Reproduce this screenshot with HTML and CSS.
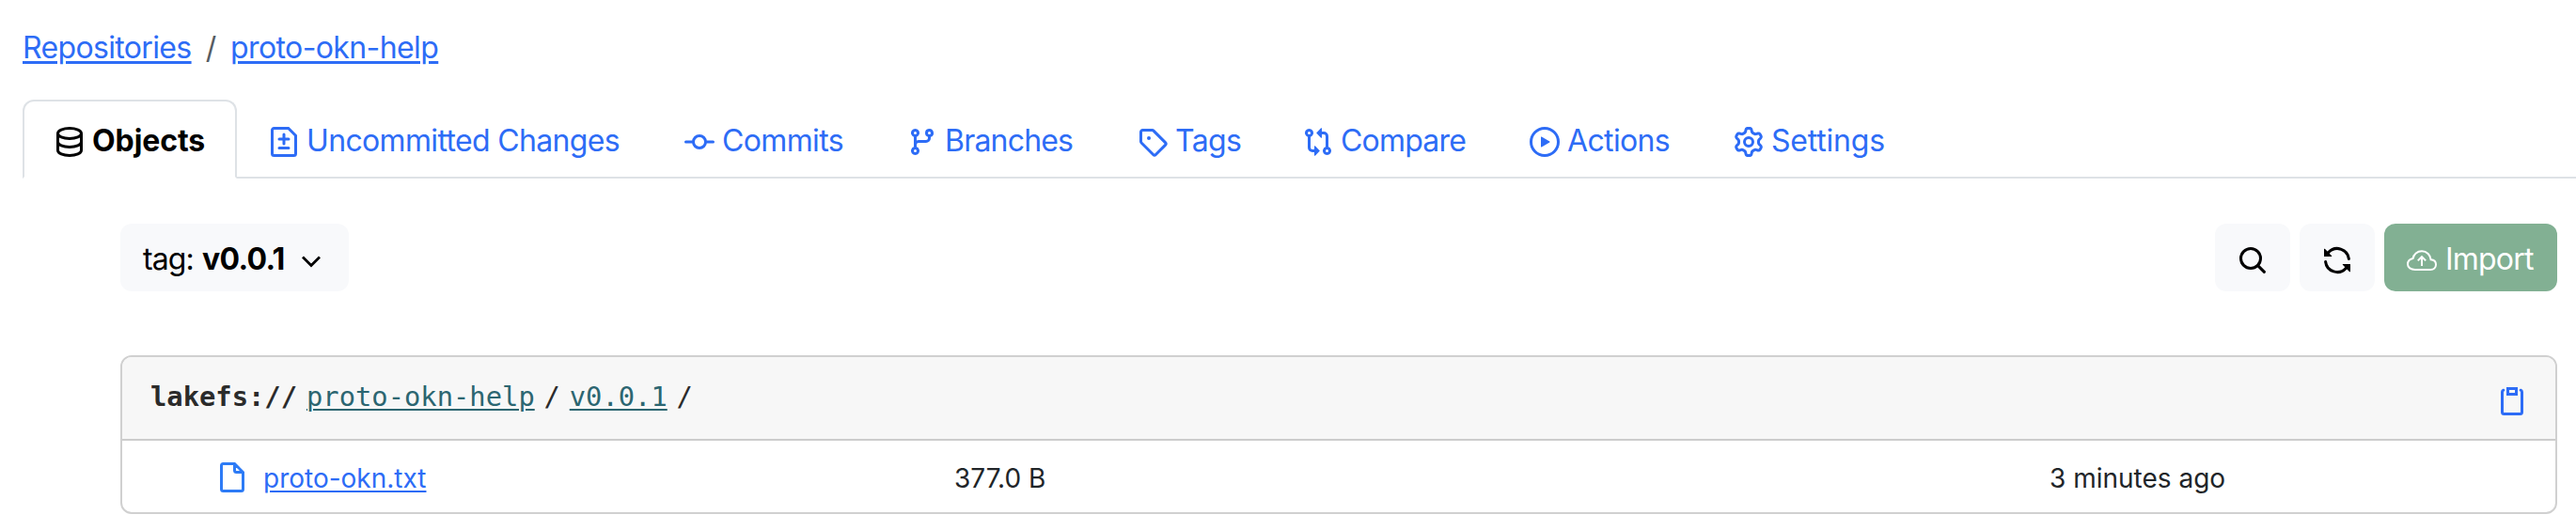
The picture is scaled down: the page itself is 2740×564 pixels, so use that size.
FILE: index.html
```html
<!DOCTYPE html>
<html lang="en">
<head>
<meta charset="utf-8">
<title>proto-okn-help</title>
<link rel="stylesheet" href="styles.css">
</head>
<body>
<nav class="breadcrumb"><a class="crumb-root" href="#">Repositories</a><span class="crumb-sep">/</span><a class="crumb-repo" href="#">proto-okn-help</a></nav>

<nav class="tabs">
  <a class="tab active"><svg class="icon line" viewBox="0 0 16 16"><ellipse cx="8" cy="3.5" rx="6.25" ry="2.75"/><path d="M1.75 3.5v9c0 1.52 2.8 2.75 6.25 2.75s6.25-1.23 6.25-2.75v-9M1.75 8c0 1.52 2.8 2.75 6.25 2.75S14.25 9.52 14.25 8"/></svg><span class="label w-objects">Objects</span></a>
  <a class="tab"><svg class="icon line" viewBox="0 0 16 16"><path d="M2.75.75h7.6l3.9 3.9v9.6a1 1 0 0 1-1 1H2.75a1 1 0 0 1-1-1V1.75a1 1 0 0 1 1-1ZM8 4v5M5.5 6.5h5M5.5 11.25h5" stroke-linecap="round"/></svg><span class="label w-changes">Uncommitted Changes</span></a>
  <a class="tab"><svg class="icon line" viewBox="0 0 16 16"><circle cx="8" cy="8" r="3.25"/><path d="M.75 8h4M11.25 8h4" stroke-linecap="round"/></svg><span class="label w-commits">Commits</span></a>
  <a class="tab"><svg class="icon" viewBox="0 0 16 16"><path d="M9.5 3.25a2.25 2.25 0 1 1 3 2.122V6A2.5 2.5 0 0 1 10 8.5H6a1 1 0 0 0-1 1v1.128a2.251 2.251 0 1 1-1.5 0V5.372a2.25 2.25 0 1 1 1.5 0v1.836A2.493 2.493 0 0 1 6 7h4a1 1 0 0 0 1-1v-.628A2.25 2.25 0 0 1 9.5 3.25Zm-6 0a.75.75 0 1 0 1.5 0 .75.75 0 0 0-1.5 0Zm8.25-.75a.75.75 0 1 0 0 1.5.75.75 0 0 0 0-1.5ZM4.25 12a.75.75 0 1 0 0 1.5.75.75 0 0 0 0-1.5Z"/></svg><span class="label w-branches">Branches</span></a>
  <a class="tab"><svg class="icon" viewBox="0 0 16 16"><path d="M1 7.775V2.75C1 1.784 1.784 1 2.75 1h5.025c.464 0 .91.184 1.238.513l6.25 6.25a1.75 1.75 0 0 1 0 2.474l-5.026 5.026a1.75 1.75 0 0 1-2.474 0l-6.25-6.25A1.752 1.752 0 0 1 1 7.775Zm1.5 0c0 .066.026.13.073.177l6.25 6.25a.25.25 0 0 0 .354 0l5.025-5.025a.25.25 0 0 0 0-.354l-6.25-6.25a.25.25 0 0 0-.177-.073H2.75a.25.25 0 0 0-.25.25ZM6 5a1 1 0 1 1 0 2 1 1 0 0 1 0-2Z"/></svg><span class="label w-tags">Tags</span></a>
  <a class="tab"><svg class="icon" viewBox="0 0 16 16"><path d="M9.573.677A.25.25 0 0 1 10 .854V2.5h1A2.5 2.5 0 0 1 13.5 5v5.628a2.251 2.251 0 1 1-1.5 0V5a1 1 0 0 0-1-1h-1v1.646a.25.25 0 0 1-.427.177L7.177 3.427a.25.25 0 0 1 0-.354ZM6 12v-1.646a.25.25 0 0 1 .427-.177l2.396 2.396a.25.25 0 0 1 0 .354l-2.396 2.396A.25.25 0 0 1 6 15.146V13.5H5A2.5 2.5 0 0 1 2.5 11V5.372a2.25 2.25 0 1 1 1.5 0V11a1 1 0 0 0 1 1ZM4 3.25a.75.75 0 1 0-1.5 0 .75.75 0 0 0 1.5 0ZM12.75 12a.75.75 0 1 0 0 1.5.75.75 0 0 0 0-1.5Z"/></svg><span class="label w-compare">Compare</span></a>
  <a class="tab"><svg class="icon" viewBox="0 0 16 16"><path d="M8 0a8 8 0 1 1 0 16A8 8 0 0 1 8 0ZM1.5 8a6.5 6.5 0 1 0 13 0 6.5 6.5 0 0 0-13 0Zm4.879-2.773 4.264 2.559a.25.25 0 0 1 0 .428l-4.264 2.559A.25.25 0 0 1 6 10.559V5.442a.25.25 0 0 1 .379-.215Z"/></svg><span class="label w-actions">Actions</span></a>
  <a class="tab"><svg class="icon" viewBox="0 0 16 16"><path d="M8 0a8.2 8.2 0 0 1 .701.031C9.444.095 9.99.645 10.16 1.29l.288 1.107c.018.066.079.158.212.224.231.114.454.243.668.386.123.082.233.09.299.071l1.103-.303c.644-.176 1.392.021 1.82.63.27.385.506.792.704 1.218.315.675.111 1.422-.364 1.891l-.814.806c-.049.048-.098.147-.088.294.016.257.016.515 0 .772-.01.147.038.246.088.294l.814.806c.475.469.679 1.216.364 1.891a7.977 7.977 0 0 1-.704 1.217c-.428.61-1.176.807-1.82.63l-1.102-.302c-.067-.019-.177-.011-.3.071a5.909 5.909 0 0 1-.668.386c-.133.066-.194.158-.211.224l-.29 1.106c-.168.646-.715 1.196-1.458 1.26a8.006 8.006 0 0 1-1.402 0c-.743-.064-1.289-.614-1.458-1.26l-.289-1.106c-.018-.066-.079-.158-.212-.224a5.738 5.738 0 0 1-.668-.386c-.123-.082-.233-.09-.299-.071l-1.103.303c-.644.176-1.392-.021-1.82-.63a8.12 8.12 0 0 1-.704-1.218c-.315-.675-.111-1.422.363-1.891l.815-.806c.05-.048.098-.147.088-.294a6.214 6.214 0 0 1 0-.772c.01-.147-.038-.246-.088-.294l-.815-.806C.635 6.045.431 5.298.746 4.623a7.92 7.92 0 0 1 .704-1.217c.428-.61 1.176-.807 1.82-.63l1.102.302c.067.019.177.011.3-.071.214-.143.437-.272.668-.386.133-.066.194-.158.211-.224l.29-1.106C6.009.645 6.556.095 7.299.03 7.53.01 7.764 0 8 0Zm-.571 1.525c-.036.003-.108.036-.137.146l-.289 1.105c-.147.561-.549.967-.998 1.189-.173.086-.34.183-.5.29-.417.278-.97.423-1.529.27l-1.103-.303c-.109-.03-.175.016-.195.045-.22.312-.412.644-.573.99-.014.031-.021.11.059.19l.815.806c.411.406.562.957.53 1.456a4.709 4.709 0 0 0 0 .582c.032.499-.119 1.05-.53 1.456l-.815.806c-.081.08-.073.159-.059.19.162.346.353.677.573.989.02.03.085.076.195.046l1.102-.303c.56-.153 1.113-.008 1.53.27.161.107.328.204.501.29.447.222.85.629.997 1.189l.289 1.105c.029.109.101.143.137.146a6.6 6.6 0 0 0 1.142 0c.036-.003.108-.036.137-.146l.289-1.105c.147-.561.549-.967.998-1.189.173-.086.34-.183.5-.29.417-.278.97-.423 1.529-.27l1.103.303c.109.029.175-.016.195-.045.22-.313.411-.644.573-.99.014-.031.021-.11-.059-.19l-.815-.806c-.411-.406-.562-.957-.53-1.456a4.709 4.709 0 0 0 0-.582c-.032-.499.119-1.05.53-1.456l.815-.806c.081-.08.073-.159.059-.19a6.464 6.464 0 0 0-.573-.989c-.02-.03-.085-.076-.195-.046l-1.102.303c-.56.153-1.113.008-1.53-.27a4.44 4.44 0 0 0-.501-.29c-.447-.222-.85-.629-.997-1.189l-.289-1.105c-.029-.11-.101-.143-.137-.146a6.6 6.6 0 0 0-1.142 0ZM11 8a3 3 0 1 1-6 0 3 3 0 0 1 6 0ZM9.5 8a1.5 1.5 0 1 0-3.001.001A1.5 1.5 0 0 0 9.5 8Z"/></svg><span class="label w-settings">Settings</span></a>
</nav>

<main class="content">
  <div class="toolbar">
    <button class="btn ref"><span class="ref-kind">tag:</span><strong class="ref-name">v0.0.1</strong><svg class="chevron" viewBox="0 0 24 16"><path d="M3 3.5l9 9 9-9"/></svg></button>
    <div class="actions">
      <button class="btn square"><svg class="icon line" viewBox="0 0 16 16"><circle cx="7" cy="7" r="5.25"/><path d="M10.8 10.8l3.4 3.4" stroke-linecap="round"/></svg></button>
      <button class="btn square"><svg class="icon" viewBox="0 0 16 16"><path d="M1.705 8.005a.75.75 0 0 1 .834.656 5.5 5.5 0 0 0 9.592 2.97l-1.204-1.204a.25.25 0 0 1 .177-.427h3.646a.25.25 0 0 1 .25.25v3.646a.25.25 0 0 1-.427.177l-1.38-1.38A7.002 7.002 0 0 1 1.05 8.84a.75.75 0 0 1 .656-.834ZM8 2.5a5.487 5.487 0 0 0-4.131 1.869l1.204 1.204A.25.25 0 0 1 4.896 6H1.25A.25.25 0 0 1 1 5.75V2.104a.25.25 0 0 1 .427-.177l1.38 1.38A7.002 7.002 0 0 1 14.95 7.16a.75.75 0 0 1-1.49.178A5.5 5.5 0 0 0 8 2.5Z"/></svg></button>
      <button class="btn import"><svg class="icon cloud" viewBox="0 0 16 16"><path d="M4.4 13H12.7C14.3 13 15.5 11.9 15.5 10.3S14.3 7.7 12.8 7.6C12.6 5.3 10.7 3.1 8 3.1 5.6 3.1 3.6 4.8 3.3 7 1.8 7.3.5 8.4.5 10.1.5 11.8 2.2 13 4.4 13ZM8 11V6.3M5.9 8.2L8 6.1l2.1 2.1"/></svg><span class="btn-text">Import</span></button>
    </div>
  </div>

  <section class="card">
    <header class="card-head">
      <div class="uri"><strong class="scheme">lakefs://</strong><a href="#">proto-okn-help</a><b>/</b><a href="#">v0.0.1</a><b>/</b></div>
      <svg class="icon line clip" viewBox="0 0 16 16"><path d="M5.75 1.75h4.5v3h-4.5z"/><path d="M3.4 2.6a1 1 0 0 0-.65.9V14.25c0 .55.45 1 1 1h8.5c.55 0 1-.45 1-1V3.5a1 1 0 0 0-.65-.9" stroke-linecap="round"/></svg>
    </header>
    <div class="row">
      <div class="file"><svg class="icon line" viewBox="0 0 16 16"><path d="M3.75.75h6l4.5 4.5v9a1 1 0 0 1-1 1h-9.5a1 1 0 0 1-1-1V1.75a1 1 0 0 1 1-1ZM9.75.75v3.5a1 1 0 0 0 1 1h3.5"/></svg><a href="#">proto-okn.txt</a></div>
      <div class="size">377.0 B</div>
      <div class="age">3 minutes ago</div>
    </div>
  </section>
</main>
</body>
</html>
```
FILE: styles.css
```css
* { box-sizing: border-box; }
body {
  margin: 0;
  background: #fff;
  color: #212529;
  font: 32px/48px Inter, "Liberation Sans", sans-serif;
  white-space: nowrap;
  overflow: hidden;
}
a { color: #2d6cf6; }
.icon { width: 32px; height: 32px; flex: none; fill: currentColor; }
.line { fill: none; stroke: currentColor; stroke-width: 1.5; }

.breadcrumb {
  display: flex;
  padding: 27px 24px 0;
  height: 106px;
}
.breadcrumb a { text-decoration-thickness: 3px; text-underline-offset: 3px; }
.crumb-root { width: 180px; letter-spacing: -0.65px; }
.crumb-sep { width: 41px; text-align: center; color: #565c62; }
.crumb-repo { letter-spacing: -0.6px; }

.tabs {
  display: flex;
  height: 84px;
  margin-left: 24px;
  box-shadow: inset 0 -2px #dee2e6;
}
.tab {
  display: flex;
  align-items: center;
  gap: 8px;
  padding: 0 32px;
  border: 2px solid transparent;
  letter-spacing: -0.65px;
}
.tab .icon { margin-top: 6px; }
.label { padding-top: 3px; }
.tab.active {
  color: #000;
  font-weight: 700;
  background: #fff;
  border-color: #dee2e6 #dee2e6 #fff;
  border-radius: 12px 12px 0 0;
}
.w-objects { width: 120px; letter-spacing: -0.1px; }
.w-changes { width: 334px; }
.w-commits { width: 129px; }
.w-branches { width: 137px; letter-spacing: -0.8px; }
.w-tags { width: 68px; }
.w-compare { width: 133px; letter-spacing: -0.8px; }
.w-actions { width: 109px; }
.w-settings { width: 120px; letter-spacing: -0.2px; }

.content { padding: 48px 20px 0 128px; }
.toolbar { display: flex; justify-content: space-between; height: 72px; }
.actions { display: flex; gap: 10px; }
.btn {
  display: flex;
  align-items: center;
  height: 72px;
  padding: 0 24px;
  border: 0;
  border-radius: 12px;
  background: #f8f9fb;
  color: #000;
  font: inherit;
  text-align: left;
}
.ref { width: 243px; }
.ref-kind { width: 63px; padding-top: 3px; letter-spacing: -0.9px; }
.ref-name { width: 103px; padding-top: 3px; letter-spacing: -0.7px; }
.chevron { width: 24px; height: 16px; margin: 8px 0 0 1px; fill: none; stroke: #000; stroke-width: 2.8; flex: none; }
.square { width: 80px; }
.square .icon { margin-top: 6px; }
.import { width: 184px; gap: 9px; background: #82b093; color: #fff; letter-spacing: -0.8px; }
.btn-text { padding-top: 3px; }
.cloud { margin-top: 6px; fill: none; stroke: #fff; stroke-width: 1; }

.card {
  height: 169px;
  margin-top: 68px;
  border: 2px solid #d0d0d0;
  border-radius: 12px;
  overflow: hidden;
}
.card-head {
  display: flex;
  align-items: center;
  justify-content: space-between;
  height: 89px;
  padding: 0 30px 4px 30px;
  background: #f7f7f7;
  border-bottom: 2px solid #ccc;
}
.uri { display: flex; font: 28.8px/44px "DejaVu Sans Mono", monospace; color: #2b2b2b; }
.uri a { color: #2c6671; text-decoration-thickness: 2px; text-underline-offset: 3px; }
.uri b { width: 37px; text-align: center; font-weight: 400; }
.scheme { width: 166px; }
.clip { margin-top: 9px; color: #2d6cf6; }
.row {
  display: grid;
  grid-template-columns: 885px 1165px 1fr;
  align-items: center;
  height: 76px;
  font-size: 28px;
}
.file { display: flex; align-items: center; gap: 18px; padding-left: 100px; }
.file .icon { color: #2d7bf6; margin-top: 2px; }
.file a { padding-top: 3px; text-decoration-thickness: 2px; text-underline-offset: 3px; }
.size, .age { padding-top: 3px; }
```
